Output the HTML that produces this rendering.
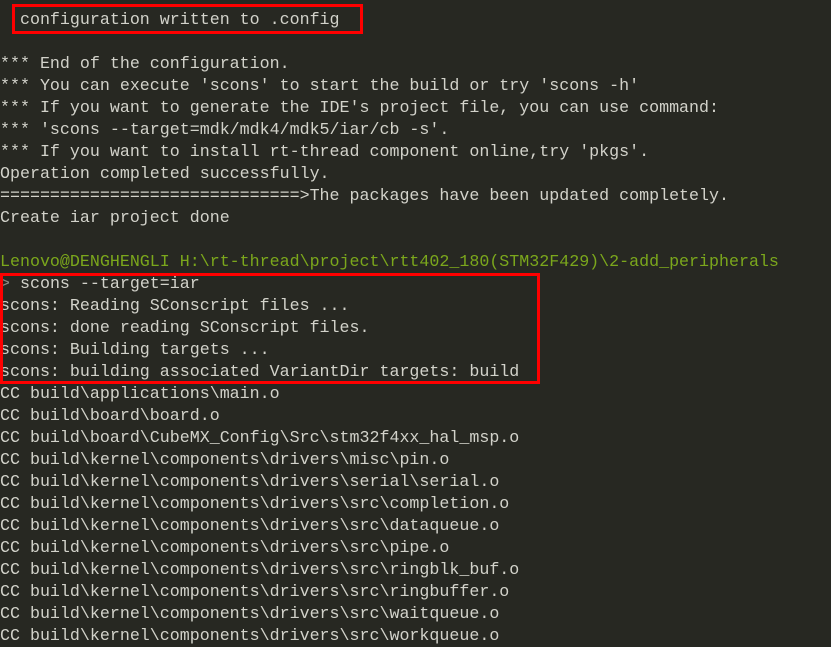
<!DOCTYPE html>
<html><head><meta charset="utf-8"><style>
html,body{margin:0;padding:0;background:#272822;width:831px;height:630px;overflow:hidden}
pre{margin:0;position:absolute;left:0;top:9px;font-family:"Liberation Mono","DejaVu Sans Mono",monospace;font-size:16.65px;line-height:22px;color:#d2d2ca;white-space:pre}
.g{color:#7ba71c}
.p{color:#8a8a84}
.box{position:absolute;border:3px solid #f00;box-sizing:border-box}
</style></head><body>
<pre>  configuration written to .config

*** End of the configuration.
*** You can execute 'scons' to start the build or try 'scons -h'
*** If you want to generate the IDE's project file, you can use command:
*** 'scons --target=mdk/mdk4/mdk5/iar/cb -s'.
*** If you want to install rt-thread component online,try 'pkgs'.
Operation completed successfully.
==============================>The packages have been updated completely.
Create iar project done

<span class="g">Lenovo@DENGHENGLI H:\rt-thread\project\rtt402_180(STM32F429)\2-add_peripherals</span>
<span class="p">&gt;</span> scons --target=iar
scons: Reading SConscript files ...
scons: done reading SConscript files.
scons: Building targets ...
scons: building associated VariantDir targets: build
CC build\applications\main.o
CC build\board\board.o
CC build\board\CubeMX_Config\Src\stm32f4xx_hal_msp.o
CC build\kernel\components\drivers\misc\pin.o
CC build\kernel\components\drivers\serial\serial.o
CC build\kernel\components\drivers\src\completion.o
CC build\kernel\components\drivers\src\dataqueue.o
CC build\kernel\components\drivers\src\pipe.o
CC build\kernel\components\drivers\src\ringblk_buf.o
CC build\kernel\components\drivers\src\ringbuffer.o
CC build\kernel\components\drivers\src\waitqueue.o
CC build\kernel\components\drivers\src\workqueue.o</pre>
<div class="box" style="left:12px;top:4px;width:351px;height:30px"></div>
<div class="box" style="left:0;top:273px;width:540px;height:111px"></div>
</body></html>
